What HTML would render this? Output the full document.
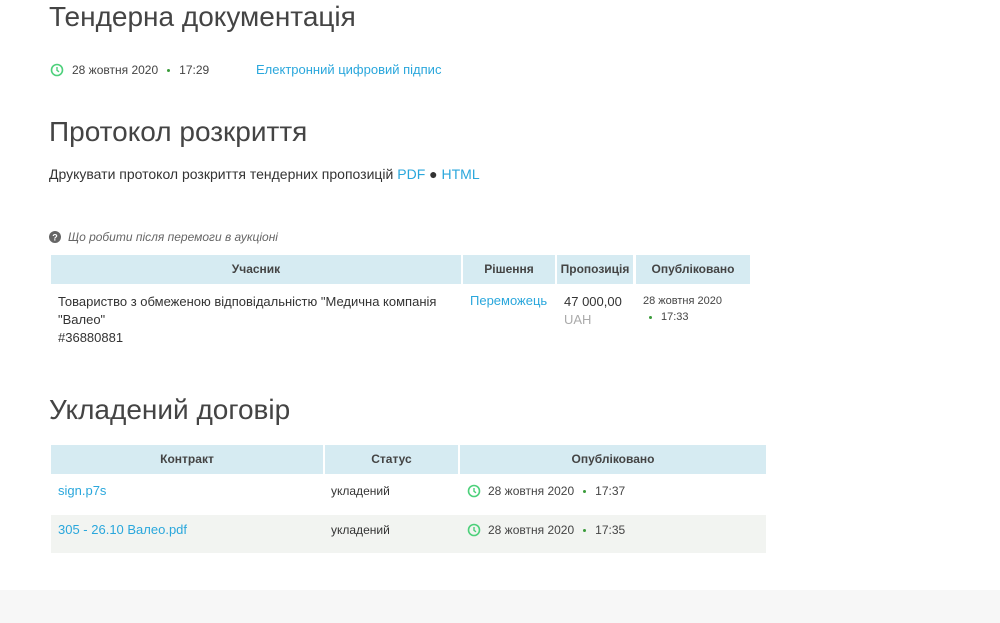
<!DOCTYPE html>
<html><head><meta charset="utf-8"><style>
body{margin:0;width:1000px;height:623px;position:relative;background:#fff;font-family:"Liberation Sans","Noto Sans CJK SC",sans-serif;color:#333;overflow:hidden}
.a{position:absolute;white-space:nowrap}
h1{position:absolute;margin:0;font-weight:normal;font-size:28px;color:#444;left:49px}
.blue{color:#2aa7dc}
.th{position:absolute;background:#d6ebf2;font-size:12px;font-weight:bold;color:#444;text-align:center;line-height:29px}
.sm{font-size:12px}
.dot{display:inline-block;width:3px;height:3px;background:#3a9b3a;border-radius:50%;vertical-align:middle;margin:0 9px}
svg.c{position:absolute}
</style></head><body>
<h1 style="top:1px">Тендерна документація</h1>
<svg class="c" style="left:50px;top:63px" width="14" height="14" viewBox="0 0 14 14"><circle cx="7" cy="7" r="5.5" fill="none" stroke="#4cd07a" stroke-width="1.6"/><path d="M7 4v3.3l2 1.5" fill="none" stroke="#4cd07a" stroke-width="1.4"/></svg>
<div class="a sm" style="left:72px;top:63px;color:#444">28 жовтня 2020<span class="dot"></span>17:29</div>
<div class="a blue" style="left:256px;top:62px;font-size:13px">Електронний цифровий підпис</div>
<h1 style="top:116px">Протокол розкриття</h1>
<div class="a" style="left:49px;top:166px;font-size:14px;color:#333">Друкувати протокол розкриття тендерних пропозицій <span class="blue">PDF</span> ● <span class="blue">HTML</span></div>
<svg class="c" style="left:49px;top:231px" width="12" height="12" viewBox="0 0 12 12"><circle cx="6" cy="6" r="6" fill="#666"/><text x="6" y="9.5" font-size="9" font-weight="bold" fill="#fff" text-anchor="middle" font-family="Liberation Sans">?</text></svg>
<div class="a sm" style="left:68px;top:230px;font-style:italic;color:#666">Що робити після перемоги в аукціоні</div>
<div class="th" style="left:51px;top:255px;width:410px">Учасник</div>
<div class="th" style="left:463px;top:255px;width:92px">Рішення</div>
<div class="th" style="left:557px;top:255px;width:76px">Пропозиція</div>
<div class="th" style="left:636px;top:255px;width:114px">Опубліковано</div>
<div class="a" style="left:58px;top:293px;font-size:13px;line-height:18px;color:#333">Товариство з обмеженою відповідальністю "Медична компанія<br>"Валео"<br>#36880881</div>
<div class="a blue" style="left:470px;top:293px;font-size:13px">Переможець</div>
<div class="a" style="left:564px;top:293px;font-size:13px;line-height:18px">47 000,00<br><span style="color:#aaa">UAH</span></div>
<div class="a" style="left:643px;top:293px;font-size:11px;line-height:16px;color:#444">28 жовтня 2020<br><span class="dot" style="margin-left:6px"></span>17:33</div>
<h1 style="top:394px">Укладений договір</h1>
<div class="th" style="left:51px;top:445px;width:272px">Контракт</div>
<div class="th" style="left:325px;top:445px;width:133px">Статус</div>
<div class="th" style="left:460px;top:445px;width:306px">Опубліковано</div>
<div style="position:absolute;left:51px;top:515px;width:715px;height:38px;background:#f2f4f1"></div>
<div class="a blue" style="left:58px;top:483px;font-size:13px">sign.p7s</div>
<div class="a sm" style="left:331px;top:484px">укладений</div>
<svg class="c" style="left:467px;top:484px" width="14" height="14" viewBox="0 0 14 14"><circle cx="7" cy="7" r="5.5" fill="none" stroke="#4cd07a" stroke-width="1.6"/><path d="M7 4v3.3l2 1.5" fill="none" stroke="#4cd07a" stroke-width="1.4"/></svg>
<div class="a sm" style="left:488px;top:484px;color:#444">28 жовтня 2020<span class="dot"></span>17:37</div>
<div class="a blue" style="left:58px;top:522px;font-size:13px">305 - 26.10 Валео.pdf</div>
<div class="a sm" style="left:331px;top:523px">укладений</div>
<svg class="c" style="left:467px;top:523px" width="14" height="14" viewBox="0 0 14 14"><circle cx="7" cy="7" r="5.5" fill="none" stroke="#4cd07a" stroke-width="1.6"/><path d="M7 4v3.3l2 1.5" fill="none" stroke="#4cd07a" stroke-width="1.4"/></svg>
<div class="a sm" style="left:488px;top:523px;color:#444">28 жовтня 2020<span class="dot"></span>17:35</div>
<div style="position:absolute;left:0;top:590px;width:1000px;height:33px;background:#f7f7f7"></div>
</body></html>
